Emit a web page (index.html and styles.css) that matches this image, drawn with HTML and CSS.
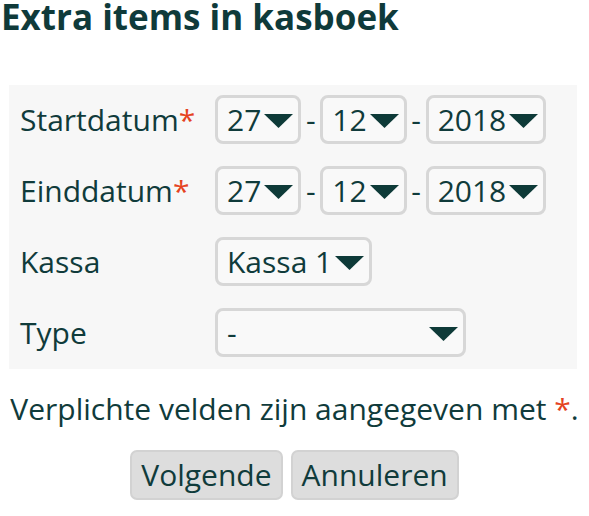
FILE: index.html
```html
<!DOCTYPE html>
<html lang="nl">
<head>
<meta charset="utf-8">
<title>Extra items in kasboek</title>
<link rel="stylesheet" href="styles.css">
</head>
<body>
<h1 class="title">Extra items in kasboek</h1>
<div class="panel">
  <div class="row">
    <div class="label">Startdatum<span class="req">*</span></div>
    <div class="fields">
      <div class="select"><span class="val">27</span><svg class="caret" viewBox="0 0 29 14"><path d="M0 0H29L14.5 14Z"/></svg></div>
      <span class="sep">-</span>
      <div class="select"><span class="val">12</span><svg class="caret" viewBox="0 0 29 14"><path d="M0 0H29L14.5 14Z"/></svg></div>
      <span class="sep">-</span>
      <div class="select"><span class="val">2018</span><svg class="caret" viewBox="0 0 29 14"><path d="M0 0H29L14.5 14Z"/></svg></div>
    </div>
  </div>
  <div class="row">
    <div class="label">Einddatum<span class="req">*</span></div>
    <div class="fields">
      <div class="select"><span class="val">27</span><svg class="caret" viewBox="0 0 29 14"><path d="M0 0H29L14.5 14Z"/></svg></div>
      <span class="sep">-</span>
      <div class="select"><span class="val">12</span><svg class="caret" viewBox="0 0 29 14"><path d="M0 0H29L14.5 14Z"/></svg></div>
      <span class="sep">-</span>
      <div class="select"><span class="val">2018</span><svg class="caret" viewBox="0 0 29 14"><path d="M0 0H29L14.5 14Z"/></svg></div>
    </div>
  </div>
  <div class="row">
    <div class="label">Kassa</div>
    <div class="fields">
      <div class="select"><span class="val">Kassa 1</span><svg class="caret" viewBox="0 0 29 14"><path d="M0 0H29L14.5 14Z"/></svg></div>
    </div>
  </div>
  <div class="row">
    <div class="label">Type</div>
    <div class="fields">
      <div class="select wide"><span class="val">-</span><svg class="caret" viewBox="0 0 29 14"><path d="M0 0H29L14.5 14Z"/></svg></div>
    </div>
  </div>
</div>
<p class="note">Verplichte velden zijn aangegeven met <span class="req">*</span>.</p>
<div class="actions">
  <button class="btn" type="button">Volgende</button>
  <button class="btn" type="button">Annuleren</button>
</div>
</body>
</html>
```
FILE: styles.css
```css
html, body {
  margin: 0;
  padding: 0;
  background: #ffffff;
}
body {
  font-family: "Open Sans", "DejaVu Sans", sans-serif;
  font-size: 30px;
  color: #103b3b;
  width: 589px;
}
.title {
  margin: 0;
  padding: 0 0 0 1px;
  font-size: 35px;
  font-weight: 700;
  line-height: 34px;
  color: #0f3a3a;
}
.panel {
  margin: 51px 0 0 9px;
  width: 568px;
  box-sizing: border-box;
  background: #f7f7f7;
  padding: 10px 11px 12px;
  display: flex;
  flex-direction: column;
  gap: 22px;
}
.row {
  display: flex;
  align-items: center;
  height: 49px;
}
.label {
  width: 195px;
  flex: none;
  line-height: 40px;
}
.req {
  color: #e5431f;
}
.fields {
  display: flex;
  align-items: center;
}
.select {
  box-sizing: border-box;
  height: 49px;
  border: 3px solid #d7d7d7;
  border-radius: 8px;
  background: #f9f9f9;
  display: flex;
  align-items: center;
  padding: 0 5px 0 9px;
  gap: 3px;
  line-height: 40px;
}
.select.wide {
  width: 251px;
  justify-content: space-between;
  padding-right: 5px;
}
.caret {
  width: 29px;
  height: 14px;
  fill: #0e3a38;
  flex: none;
  margin-top: 2px;
}
.sep {
  width: 19px;
  text-align: center;
  line-height: 40px;
}
.note {
  margin: 20px 0 0;
  text-align: center;
  line-height: 40px;
}
.actions {
  margin-top: 21px;
  display: flex;
  justify-content: center;
  gap: 8px;
}
.btn {
  font-family: inherit;
  font-size: 30px;
  color: #103b3b;
  height: 50px;
  box-sizing: border-box;
  background: #dddddd;
  border: 2px solid #d2d2d2;
  border-radius: 7px;
  padding: 0 9px;
  line-height: 42px;
  cursor: pointer;
}
```
